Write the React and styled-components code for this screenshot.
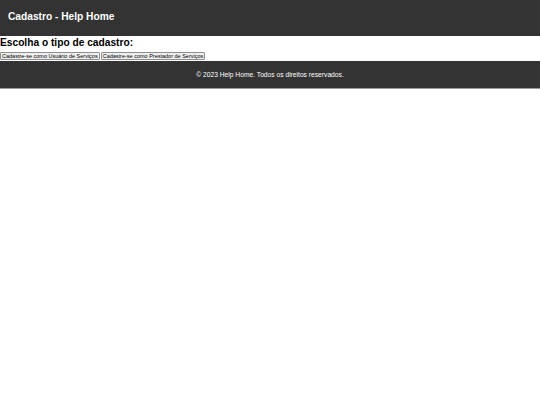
import React from "react"
import styled, { createGlobalStyle } from "styled-components"

const GlobalStyle = createGlobalStyle`
    body {
        margin: 0;
        font-family: "Liberation Sans", Arial, sans-serif;
        background: #fff;
    }
`

function App() {
    return (
        <>
            <GlobalStyle />
            <Header>
                <Title>Cadastro - Help Home</Title>
            </Header>
            <Main>
                <Heading>Escolha o tipo de cadastro:</Heading>
                <Buttons>
                    <Button>Cadastre-se como Usuário de Serviços</Button>
                    <Button>Cadastre-se como Prestador de Serviços</Button>
                </Buttons>
            </Main>
            <Footer>
                <p>© 2023 Help Home. Todos os direitos reservados.</p>
            </Footer>
        </>
    )
}

const Header = styled.header`
    background: #333;
    color: #fff;
    height: 36px;
    display: flex;
    align-items: center;
    padding: 0 8px 4px;
    box-sizing: border-box;
`

const Title = styled.h1`
    margin: 0;
    font-size: 10.2px;
    font-weight: bold;
`

const Main = styled.main`
    padding: 0 0 1px;
`

const Heading = styled.h2`
    margin: 1px 0 3px;
    font-size: 10.2px;
    line-height: 12px;
    font-weight: bold;
    color: #000;
`

const Buttons = styled.div`
    display: flex;
    gap: 1px;
`

const Button = styled.button`
    font-family: "Liberation Sans", Arial, sans-serif;
    font-size: 5.5px;
    padding: 0 1px;
    height: 8px;
    line-height: 6px;
    background: #efefef;
    border: 1px solid #8f8f8f;
    border-radius: 1px;
    color: #000;
    cursor: pointer;
`

const Footer = styled.footer`
    background: #333;
    color: #fff;
    height: 27px;
    display: flex;
    align-items: center;
    justify-content: center;
    border-bottom: 1px solid #999;

    p {
        margin: 0;
        font-size: 6.7px;
    }
`

export default App
